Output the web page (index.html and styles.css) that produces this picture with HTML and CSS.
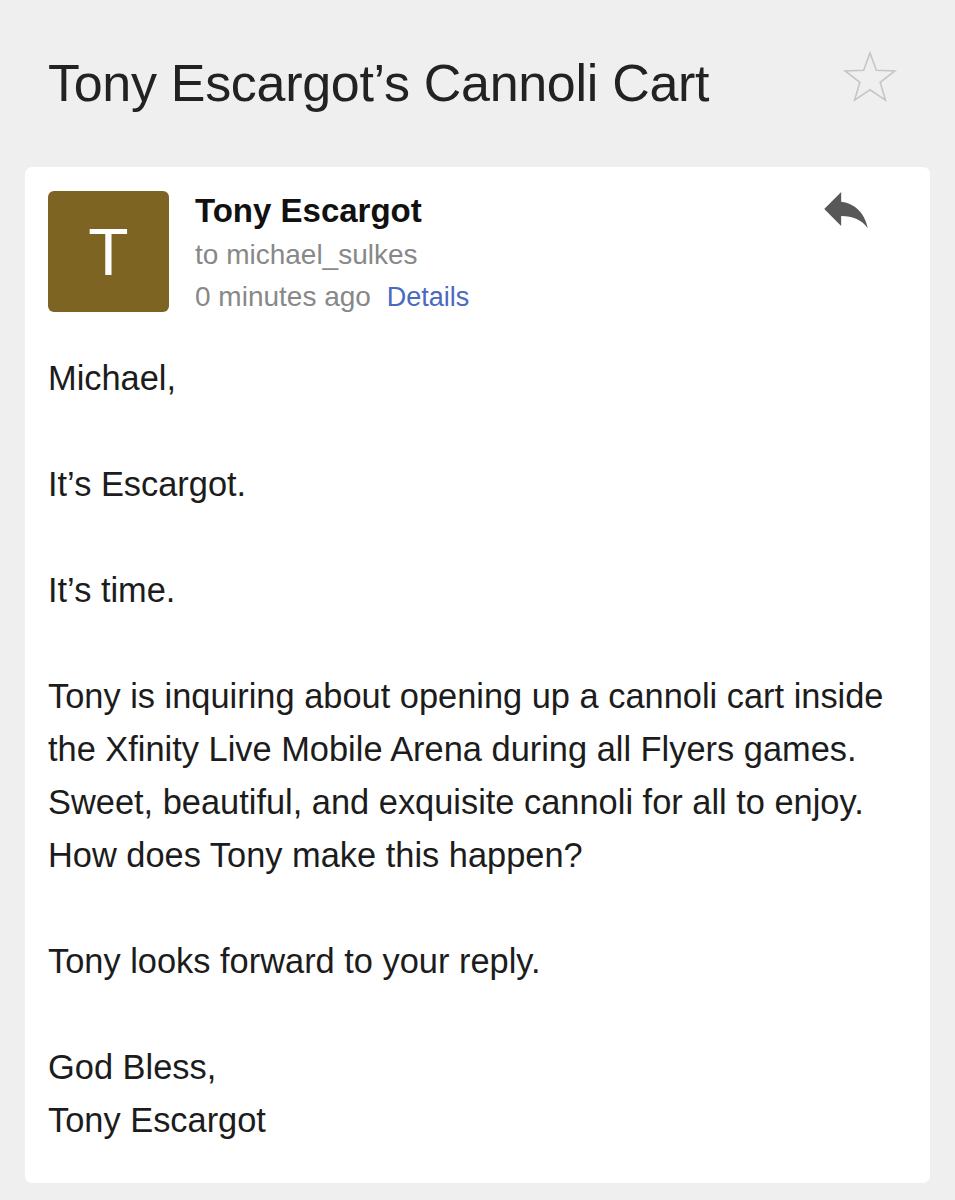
FILE: index.html
```html
<!DOCTYPE html>
<html lang="en">
<head>
    <meta charset="UTF-8">
    <meta name="viewport" content="width=device-width, initial-scale=1.0">
    <title>Tony Escargot's Cannoli Cart</title>
    <link rel="stylesheet" href="styles.css">
</head>
<body>
    <div class="page">
        <header class="subject-bar">
            <h1 class="subject">Tony Escargot’s Cannoli Cart</h1>
            <svg class="star" width="56" height="56" viewBox="-30 -30 60 60" aria-label="Star">
                <polygon points="0,-28 6.76,-9.3 26.6,-8.65 10.9,3.55 16.5,22.65 0,11.5 -16.5,22.65 -10.9,3.55 -26.6,-8.65 -6.76,-9.3"
                         fill="none" stroke="#c6c6c6" stroke-width="1.7" stroke-linejoin="miter"/>
            </svg>
        </header>

        <div class="message">
            <div class="sender">
                <div class="avatar">T</div>
                <div class="meta">
                    <div class="name">Tony Escargot</div>
                    <div class="to">to michael_sulkes</div>
                    <div class="when">0 minutes ago <a class="details" href="#">Details</a></div>
                </div>
                <svg class="reply" width="58" height="58" viewBox="0 0 24 24" aria-label="Reply">
                    <path d="M10 9V5l-7 7 7 7v-4.1c5 0 8.5 1.6 11 5.1-1-5-4-10-11-11z" fill="#585858"/>
                </svg>
            </div>

            <div class="body">
                <p>Michael,</p>
                <p>It’s Escargot.</p>
                <p>It’s time.</p>
                <p>Tony is inquiring about opening up a cannoli cart inside<br>
                the Xfinity Live Mobile Arena during all Flyers games.<br>
                Sweet, beautiful, and exquisite cannoli for all to enjoy.<br>
                How does Tony make this happen?</p>
                <p>Tony looks forward to your reply.</p>
                <p>God Bless,<br>
                Tony Escargot</p>
            </div>
        </div>
    </div>
</body>
</html>
```

FILE: styles.css
```css
body {
    margin: 0;
    background-color: #efefef;
    font-family: 'Liberation Sans', Arial, sans-serif;
    color: #1c1c1c;
}
.page {
    padding: 0 25px;
}
.subject-bar {
    height: 160px;
    display: flex;
    align-items: center;
    justify-content: space-between;
    padding: 0 32px 0 23px;
}
.subject {
    margin: 6px 0 0 0;
    font-size: 52px;
    font-weight: 300;
    line-height: 60px;
    color: #222;
    letter-spacing: -0.3px;
}
.star {
    display: block;
    margin-top: -2px;
}
.message {
    margin-top: 7px;
    background-color: white;
    border-radius: 7px;
    padding: 24px 23px 36px 23px;
}
.sender {
    display: flex;
    align-items: flex-start;
}
.avatar {
    width: 121px;
    height: 121px;
    flex-shrink: 0;
    background-color: #7e6422;
    border-radius: 6px;
    color: white;
    font-size: 66px;
    font-weight: 300;
    display: flex;
    align-items: center;
    justify-content: center;
}
.meta {
    margin-left: 26px;
    flex: 1;
}
.name {
    font-size: 33px;
    font-weight: bold;
    line-height: 40px;
    color: #111;
}
.to {
    margin-top: 3px;
    font-size: 28px;
    line-height: 42px;
    color: #888;
}
.when {
    font-size: 28px;
    line-height: 42px;
    color: #888;
}
.details {
    margin-left: 8px;
    font-size: 27px;
    color: #4a6ac0;
    text-decoration: none;
}
.reply {
    display: block;
    margin: -11px 32px 0 0;
}
.body {
    margin-top: 34px;
    font-size: 34.4px;
    line-height: 53px;
}
.body p {
    margin: 0 0 53px 0;
}
.body p:last-child {
    margin-bottom: 0;
}
```
